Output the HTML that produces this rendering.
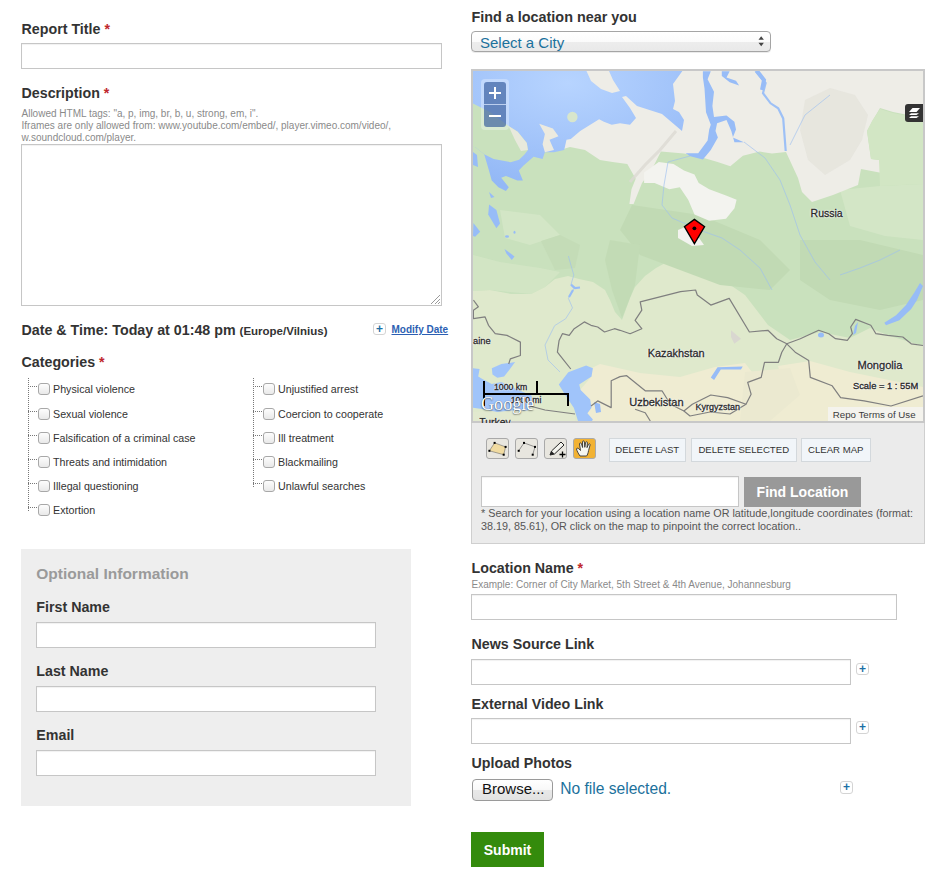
<!DOCTYPE html>
<html><head><meta charset="utf-8"><style>
html,body{margin:0;padding:0;background:#fff;width:952px;height:881px;overflow:hidden;position:relative}
.t{position:absolute;white-space:nowrap;line-height:1;font-family:"Liberation Sans", sans-serif}
.b{position:absolute}
</style></head><body>
<div class="t" style="left:21.5px;top:21.94px;font-size:14.25px;font-weight:bold;color:#333;">Report Title<span style="color:#c0272d">&nbsp;*</span></div>
<div class="b" style="left:21px;top:43px;width:421px;height:26px;background:#fff;border:1px solid #c6c6c6;box-sizing:border-box;box-shadow:inset 0 1px 1px rgba(0,0,0,0.06);"></div>
<div class="t" style="left:21.5px;top:85.94px;font-size:14.25px;font-weight:bold;color:#333;">Description<span style="color:#c0272d">&nbsp;*</span></div>
<div class="t" style="left:21.5px;top:108.53px;font-size:10px;font-weight:normal;color:#8a8a8a;">Allowed HTML tags: "a, p, img, br, b, u, strong, em, i".</div>
<div class="t" style="left:21.5px;top:120.53px;font-size:10px;font-weight:normal;color:#8a8a8a;">Iframes are only allowed from: www.youtube.com/embed/, player.vimeo.com/video/,</div>
<div class="t" style="left:21.5px;top:132.53px;font-size:10px;font-weight:normal;color:#8a8a8a;">w.soundcloud.com/player.</div>
<div class="b" style="left:21px;top:144px;width:421px;height:162px;background:#fff;border:1px solid #c6c6c6;box-sizing:border-box;box-shadow:inset 0 1px 1px rgba(0,0,0,0.06);"></div>
<svg class="b" style="left:428px;top:292px" width="13" height="13"><path d="M12 3 L3 12 M12 7 L7 12 M12 10 L10 12" stroke="#9a9a9a" stroke-width="1"/></svg>
<div class="t" style="left:21.5px;top:322.94px;font-size:14.25px;font-weight:bold;color:#333;">Date &amp; Time: Today at 01:48 pm <span style="font-size:11.5px">(Europe/Vilnius)</span></div>
<div class="b" style="left:373px;top:323px;width:11px;height:10px;border:1px solid #d4d4d4;border-radius:3px;background:#fff"></div>
<div class="t" style="left:373px;top:323px;width:13px;height:12px;line-height:12px;text-align:center;font-size:12px;font-weight:bold;color:#1d6fa5">+</div>
<div class="t" style="left:391.5px;top:324.54px;font-size:10px;font-weight:bold;color:#2c5fb3;"><u>Modify Date</u></div>
<div class="t" style="left:21.5px;top:355.44px;font-size:14.25px;font-weight:bold;color:#333;">Categories<span style="color:#c0272d">&nbsp;*</span></div>
<div class="b" style="left:28px;top:378px;width:0;height:133px;border-left:1px dotted #777"></div>
<div class="b" style="left:28px;top:386px;width:9px;height:0;border-top:1px dotted #777"></div>
<div class="b" style="left:38px;top:383px;width:10px;height:10px;border:1px solid #a8a8a8;border-radius:3px;background:linear-gradient(#fdfdfd,#e9e9e9)"></div>
<div class="t" style="left:53px;top:384.44px;font-size:10.7px;font-weight:normal;color:#333;">Physical violence</div>
<div class="b" style="left:28px;top:411px;width:9px;height:0;border-top:1px dotted #777"></div>
<div class="b" style="left:38px;top:408px;width:10px;height:10px;border:1px solid #a8a8a8;border-radius:3px;background:linear-gradient(#fdfdfd,#e9e9e9)"></div>
<div class="t" style="left:53px;top:409.44px;font-size:10.7px;font-weight:normal;color:#333;">Sexual violence</div>
<div class="b" style="left:28px;top:435px;width:9px;height:0;border-top:1px dotted #777"></div>
<div class="b" style="left:38px;top:432px;width:10px;height:10px;border:1px solid #a8a8a8;border-radius:3px;background:linear-gradient(#fdfdfd,#e9e9e9)"></div>
<div class="t" style="left:53px;top:433.44px;font-size:10.7px;font-weight:normal;color:#333;">Falsification of a criminal case</div>
<div class="b" style="left:28px;top:459px;width:9px;height:0;border-top:1px dotted #777"></div>
<div class="b" style="left:38px;top:456px;width:10px;height:10px;border:1px solid #a8a8a8;border-radius:3px;background:linear-gradient(#fdfdfd,#e9e9e9)"></div>
<div class="t" style="left:53px;top:457.44px;font-size:10.7px;font-weight:normal;color:#333;">Threats and intimidation</div>
<div class="b" style="left:28px;top:483px;width:9px;height:0;border-top:1px dotted #777"></div>
<div class="b" style="left:38px;top:480px;width:10px;height:10px;border:1px solid #a8a8a8;border-radius:3px;background:linear-gradient(#fdfdfd,#e9e9e9)"></div>
<div class="t" style="left:53px;top:481.44px;font-size:10.7px;font-weight:normal;color:#333;">Illegal questioning</div>
<div class="b" style="left:28px;top:507px;width:9px;height:0;border-top:1px dotted #777"></div>
<div class="b" style="left:38px;top:504px;width:10px;height:10px;border:1px solid #a8a8a8;border-radius:3px;background:linear-gradient(#fdfdfd,#e9e9e9)"></div>
<div class="t" style="left:53px;top:505.44px;font-size:10.7px;font-weight:normal;color:#333;">Extortion</div>
<div class="b" style="left:253px;top:378px;width:0;height:109px;border-left:1px dotted #777"></div>
<div class="b" style="left:253px;top:386px;width:9px;height:0;border-top:1px dotted #777"></div>
<div class="b" style="left:263px;top:383px;width:10px;height:10px;border:1px solid #a8a8a8;border-radius:3px;background:linear-gradient(#fdfdfd,#e9e9e9)"></div>
<div class="t" style="left:278px;top:384.44px;font-size:10.7px;font-weight:normal;color:#333;">Unjustified arrest</div>
<div class="b" style="left:253px;top:411px;width:9px;height:0;border-top:1px dotted #777"></div>
<div class="b" style="left:263px;top:408px;width:10px;height:10px;border:1px solid #a8a8a8;border-radius:3px;background:linear-gradient(#fdfdfd,#e9e9e9)"></div>
<div class="t" style="left:278px;top:409.44px;font-size:10.7px;font-weight:normal;color:#333;">Coercion to cooperate</div>
<div class="b" style="left:253px;top:435px;width:9px;height:0;border-top:1px dotted #777"></div>
<div class="b" style="left:263px;top:432px;width:10px;height:10px;border:1px solid #a8a8a8;border-radius:3px;background:linear-gradient(#fdfdfd,#e9e9e9)"></div>
<div class="t" style="left:278px;top:433.44px;font-size:10.7px;font-weight:normal;color:#333;">Ill treatment</div>
<div class="b" style="left:253px;top:459px;width:9px;height:0;border-top:1px dotted #777"></div>
<div class="b" style="left:263px;top:456px;width:10px;height:10px;border:1px solid #a8a8a8;border-radius:3px;background:linear-gradient(#fdfdfd,#e9e9e9)"></div>
<div class="t" style="left:278px;top:457.44px;font-size:10.7px;font-weight:normal;color:#333;">Blackmailing</div>
<div class="b" style="left:253px;top:483px;width:9px;height:0;border-top:1px dotted #777"></div>
<div class="b" style="left:263px;top:480px;width:10px;height:10px;border:1px solid #a8a8a8;border-radius:3px;background:linear-gradient(#fdfdfd,#e9e9e9)"></div>
<div class="t" style="left:278px;top:481.44px;font-size:10.7px;font-weight:normal;color:#333;">Unlawful searches</div>
<div class="b" style="left:21px;top:549px;width:390px;height:257px;background:#eeeeee"></div>
<div class="t" style="left:36.3px;top:565.58px;font-size:15.5px;font-weight:bold;color:#9a9a9a;">Optional Information</div>
<div class="t" style="left:36.3px;top:599.64px;font-size:14.25px;font-weight:bold;color:#333;">First Name</div>
<div class="b" style="left:36px;top:622px;width:340px;height:26px;background:#fff;border:1px solid #c6c6c6;box-sizing:border-box;box-shadow:inset 0 1px 1px rgba(0,0,0,0.06);"></div>
<div class="t" style="left:36.3px;top:663.64px;font-size:14.25px;font-weight:bold;color:#333;">Last Name</div>
<div class="b" style="left:36px;top:686px;width:340px;height:26px;background:#fff;border:1px solid #c6c6c6;box-sizing:border-box;box-shadow:inset 0 1px 1px rgba(0,0,0,0.06);"></div>
<div class="t" style="left:36.3px;top:727.64px;font-size:14.25px;font-weight:bold;color:#333;">Email</div>
<div class="b" style="left:36px;top:750px;width:340px;height:26px;background:#fff;border:1px solid #c6c6c6;box-sizing:border-box;box-shadow:inset 0 1px 1px rgba(0,0,0,0.06);"></div>
<div class="t" style="left:471.4px;top:9.61px;font-size:14.4px;font-weight:bold;color:#333;">Find a location near you</div>
<div class="b" style="left:471px;top:31px;width:298px;height:19px;border:1px solid #a5a5a5;border-radius:4px;background:linear-gradient(#ffffff,#fbfbfb 50%,#ededed 52%,#e9e9e9);box-shadow:0 1px 0 rgba(0,0,0,0.08)"></div>
<div class="t" style="left:480px;top:34.50px;font-size:15px;font-weight:normal;color:#1b719c;">Select a City</div>
<svg class="b" style="left:757px;top:35px" width="8" height="13"><path d="M1.5 4.8 L4.2 1.3 L6.9 4.8 Z M1.5 7.8 L4.2 11.3 L6.9 7.8 Z" fill="#444"/></svg>
<div class="b" style="left:471px;top:69px;width:450px;height:350px;border:2px solid #c8c8c8;overflow:hidden;background:#dfeacb"><svg width="450" height="350" viewBox="473 71 450 350" style="position:absolute;left:0;top:0;display:block">
<defs>
<radialGradient id="sea" cx="0.45" cy="0.1" r="0.9"><stop offset="0" stop-color="#b7d4ff"/><stop offset="1" stop-color="#93b8f6"/></radialGradient>
</defs>
<rect x="473" y="71" width="450" height="350" fill="#c9e1bd"/>
<!-- light steppe -->
<path fill="#dfe9cc" d="M473 291 L490 290 L511 294 L531 294 L545 287 L555 279 L568 276 L579 279 L593 282 L605 290 L610 300 L615 312 L622 320 L630 298 L635 287 L645 276 L656 268 L667 262 L691 262 L705 266 L720 278 L745 295 L768 325 L790 340 L820 332 L850 338 L870 328 L890 336 L923 346 L923 421 L473 421 Z"/>
<path fill="#d6e7c8" d="M473 255 L500 262 L540 268 L560 272 L545 287 L531 294 L490 290 L473 291 Z" opacity="0.7"/>
<!-- lighter patches in forest -->
<path fill="#d3e6c6" d="M840 190 L880 186 L923 184 L923 240 L885 236 L850 226 Z"/>
<path fill="#d3e6c6" d="M500 210 L540 215 L560 235 L530 245 L505 238 Z"/>
<!-- darker forest -->
<path fill="#c1dab4" d="M632 205 L700 215 L760 240 L790 270 L770 290 L720 285 L680 270 L640 255 L620 230 Z"/>
<path fill="#c1dab4" d="M800 240 L860 240 L923 255 L923 300 L880 310 L830 300 L800 280 Z"/>
<path fill="#c4dcb7" d="M541 241 L560 235 L580 245 L575 268 L555 270 Z"/><path fill="#c2dbb5" d="M610 240 L640 245 L635 285 L622 318 L612 290 L605 260 Z"/>
<!-- desert -->
<path fill="#efecd2" d="M588 370 L600 364 L640 373 L680 377 L715 367 L745 363 L758 380 L768 398 L745 421 L578 421 L590 406 L580 390 L592 376 Z"/>
<path fill="#efecd2" d="M778 366 L810 361 L850 372 L923 387 L923 421 L762 421 L788 400 Z"/>
<path fill="#ebe9d0" d="M745 372 L790 368 L800 395 L770 421 L740 421 Z"/>
<path fill="#e2e9cf" d="M473 412 L540 408 L575 414 L575 421 L473 421 Z"/>
<!-- tundra north -->
<path fill="#eeede7" d="M540 71 L923 71 L923 118 L893 112 L880 108 L873 120 L867 131 L871 159 L879 160 L882 173 L861 169 L858 185 L833 195 L812 202 L802 192 L798 178 L786 152 L772 153.6 L759.7 151.5 L742.9 155.7 L730.3 166.2 L717.6 162 L703 157.8 L684 153.6 L660.9 151.5 L652.5 168.3 L642 183 L633.6 204 L629.4 204 L631.5 189.3 L635.7 178.8 L627.3 164.1 L612.6 162 L600 160 L585 150 L570 147 L560 150 L540 140 Z"/>
<path fill="#d2e6c4" d="M872 121 L880 109 L893 113 L923 119 L923 184 L880 186 L879 160 L871 159 L867 131 Z"/>
<path d="M755.5 71 L765.6 83.1 L763 93.2 L770.6 103.3 L778.2 108.3 L783.2 118.4 L785.7 151" stroke="#9dc0f6" stroke-width="2.2" fill="none"/>
<path d="M757 71 L764 80 L762 90" stroke="#97bcf7" stroke-width="4" fill="none"/>
<!-- Putorana texture -->
<path fill="#e5e3dc" d="M805 100 L830 88 L855 95 L868 115 L862 140 L850 160 L825 175 L808 160 L800 130 Z" opacity="0.8"/>
<!-- west siberian swamps -->
<path fill="#f3f3ef" d="M644.1 172.5 L658.8 162 L673.5 164.1 L684 170.4 L694.5 174.6 L698.7 183 L709.2 189.3 L726 195.6 L736.6 199.8 L734.5 208.2 L726 218.7 L709.2 220.8 L694.5 214.5 L688.2 199.8 L679.8 187.2 L669.3 189.3 L654.6 183 L644.1 183 Z"/>
<path fill="#f3f3ef" d="M678 230 L690 225 L704 245 L692 246 L678 238 Z"/>
<!-- Kola land tint -->
<path fill="#e8eadc" d="M510 127 L518 132 L527 143 L528 150 L520 150 L512 138 Z"/>
<!-- Urals -->
<path d="M630 182 L645 165 L660 150 L676 131" stroke="#dcdad3" stroke-width="3" fill="none" opacity="0.8"/>
<!-- north seas -->
<path fill="url(#sea)" d="M473 71 L682.4 71 L673 84 L675 101 L673 109 L679 112 L684 120 L682 131 L662 114 L637 106 L626 96 L622 97 L630 108 L636 118 L630 124.8 L620 123.3 L611.7 124.8 L603.9 121.7 L599.1 119.3 L580.2 131.1 L570.8 139 L566.5 139.7 L564.2 150 L554 152.2 L544.9 152.2 L542.6 159 L533.6 156.8 L523.3 165.8 L518.8 170.4 L522.9 180.6 L517.3 180.6 L505.9 175.9 L501.2 177.8 L508.8 187.3 L505.9 191 L498.4 187.3 L491.7 180.6 L488.9 170.2 L484.2 154.2 L475.7 147.6 L473 146 Z"/>
<!-- Kola peninsula -->
<path fill="#c9e1bd" d="M473 103.6 L490 112 L508.6 126.1 L517.7 131.8 L526.8 143.1 L527.9 150 L524.5 154.5 L519.1 159.8 L510.6 162.2 L493.6 158.9 L484.2 154.2 L475.7 147.6 L473 146.5 Z"/>
<path fill="#e8e9dc" d="M508.6 126.1 L517.7 131.8 L526.8 143.1 L527.9 150 L521 151 L515 140 Z"/>
<!-- Kanin peninsula -->
<path fill="#eceadf" d="M539.2 123.8 L552.9 128.4 L558.5 136.3 L549.5 139.7 L554 149.9 L544.9 152.2 L542.6 144.3 L544.9 134.1 Z"/>
<!-- Novaya Zemlya tip -->
<path fill="#eeede7" d="M586.5 71 L609 71 L613 80 L620 91 L612 93 L601 89 L591 81 Z"/>
<circle cx="572.4" cy="117" r="5.2" fill="#d8e6cc"/>
<!-- Ob gulf -->
<path fill="#97bcf7" d="M702.9 71.3 L710.8 71.3 L707.6 79.2 L714 91.8 L712.4 106 L714 117 L726.5 115.4 L734.4 121.7 L736 129.6 L732.8 137.4 L743.9 142.2 L734.4 142.2 L731.3 131.1 L726.5 120.1 L717.1 123.3 L715.5 131.1 L717.9 137.4 L710.8 150 L702.9 159.5 L690.3 156.3 L685.6 153.2 L698.2 153.2 L707.6 140.6 L709.2 129.6 L710.8 124.8 L706 112.2 L704.5 88.6 L702.9 77.6 Z"/>
<path fill="#97bcf7" d="M721.8 71.3 L729.7 71.3 L726.5 77.6 L736 80.7 L739.1 85.5 L729.7 82.3 L721.8 76 Z"/>
<!-- rivers -->
<g stroke="#9dbff2" stroke-width="0.9" fill="none" opacity="0.7">
<path d="M690 156 L668 162 L664 185 L662 205 L672 218 L686 224 L705 232 L722 238 L740 250 L760 268 L772 290"/>
<path d="M744 142 L765 158 L780 180 L790 205 L800 235 L815 262 L830 280"/>
<path d="M568.4 256 L571 265.5 L573.8 275 L571 284.6 L573.8 288.7 L568.4 298.3 L572.5 307.9 L565.6 318.8 L554.7 325.6 L545 345 L548 360 L560 372"/>
<path d="M830 95 L805 115 L790 145"/>
<path d="M900 250 L880 260 L860 268 L840 275"/>
</g>
<path d="M571 284.6 L575 288 L580 287.5 M573 290 L569 297" stroke="#97bcf7" stroke-width="2.2" fill="none"/>
<!-- lakes -->
<g fill="#97bcf7">
<path d="M489.1 204.5 L496.4 210 L500 223.6 L496.4 228.2 L488.2 214.5 Z"/>
<path d="M473.4 223 L480.2 231.7 L475.1 236.8 L473 236 Z"/>
<path d="M504.5 249 L514.5 256.4 L511.8 260 L506.4 253.6 Z"/><ellipse cx="507" cy="236.5" rx="2" ry="1.2"/><ellipse cx="514.5" cy="232.3" rx="1" ry="1.5"/><path d="M489 192 L494.5 197 L491 198 Z"/>
<path d="M473 152 L477 155 L478 167 L473 165 Z"/>
<path d="M920 283 L923 286 L917 300 L911.2 309 L899.4 320.3 L886 325.3 L884.3 322.8 L896.1 315.2 L906 305 L914 293 Z"/>
<path d="M710.8 377.4 L717.5 367.3 L742.7 366.5 L741 369.5 L720.8 369.5 L714.1 379.9 Z"/>
<path d="M594 402 L600 404 L601 412 L596 413 Z"/>
<path d="M855 326 L858 322 L856 333 L853 335 Z"/>
<ellipse cx="821" cy="335" rx="3" ry="2.5"/>
</g>
<!-- Caspian -->
<path fill="#a0c4fa" d="M558.8 384.6 L568.3 372.3 L586.1 365.5 L592.9 368.2 L591.5 376.4 L579.2 384.6 L580.6 390.1 L590.2 399.6 L591.5 407.8 L587.4 413.3 L592.9 419.4 L592 421 L578 421 L573.8 407.8 L565.6 395.5 Z"/>
<!-- Black sea & Azov -->
<path fill="#a0c4fa" d="M491.8 368.2 L501.4 364.1 L515.1 362.1 L509.6 369.6 L504.1 376.4 L497.3 377.8 L492.5 374.4 Z"/>
<path fill="#a0c4fa" d="M473 368.2 L479.6 368.9 L478.2 376.4 L483.7 379.8 L491.8 383.9 L501.4 381.9 L509.6 386 L521.9 391.4 L531.5 395.5 L532.8 405.1 L527.4 410.5 L511 410.5 L497.3 411.9 L483.7 409.2 L473 407.8 Z"/>
<!-- borders -->
<g stroke="#7f7f7f" stroke-width="1.2" fill="none" stroke-linejoin="round">
<path d="M473.4 300.1 L478.4 306.8 L473.4 310.2 L473.4 318.6 L485.1 316.9 L488.5 325.3 L495.2 333.7 L507 335.4 L520.4 342.1 L520.4 355.5 L510.3 358.9 L508.7 364"/>
<path d="M570.8 369 L564.1 360.6 L557.4 352.2 L559.1 340.4 L562.4 333.7 L569.2 335.4 L574.2 328.7 L584.3 321.9 L591 325.3 L597.7 327 L604.5 332 L614.5 328.7 L620 330.3 L630.1 333.7 L641.8 328.7 L635.1 320.3 L641.8 310.2 L640.2 301.8 L680.5 291.7 L695.6 290 L697.3 295 L710.8 305.1 L729.2 298.4 L749.4 332 L767.9 330.3 L776.7 338.7 L786.8 343.8 L800.3 338.7 L818.7 330.3 L828.8 333.7 L835.5 338.7 L847.3 340.4 L852.4 333.7 L850.7 327 L855.7 319.4 L870.8 325.3 L875.9 333.7 L887.6 335.4 L902.8 337 L911.2 343.8 L923 345.5"/>
<path d="M786.8 343.8 L781.8 352.2 L778.4 362.3 L764.5 362.3 L761.2 377.4 L747.7 382.4 L751.1 394.2 L746 404.3 L727.6 397.6 L710.8 395 L692.3 404.3 L683.9 411 L670.4 404.3 L662 390.8 L645.2 390.8 L626.7 375.7 L620 376.6 L611.2 380.8 L611.2 407.6 L597.7 400.9 L591 406"/>
<path d="M786.8 343.8 L795.2 352.2 L808.7 360.6 L810.3 377.4 L832.2 385.8 L840.6 397.6 L864.1 400.9 L891 406 L923 395.9"/>
<path d="M683.9 411 L690 416 L710 412 L730 414 L746 404.3"/>
<path d="M635.1 409.3 L645.2 412.7 L650.3 421"/>
<path d="M530 406 L545 410 L560 412 L575 414"/>
</g>
<!-- grey patch -->
<path fill="#d9d7d0" d="M731 330.3 L741 338.7 L734.3 343.8 L731 337 Z"/>
</svg>
</div>
<div class="b" style="left:481px;top:79px;width:28px;height:50.5px;border-radius:4px;background:rgba(255,255,255,0.3)"></div>
<div class="b" style="left:484px;top:82px;width:22px;height:45px;border-radius:3px;background:rgba(40,80,150,0.62)"></div>
<div class="b" style="left:484px;top:104px;width:22px;height:1px;background:rgba(210,225,250,0.8)"></div>
<svg class="b" style="left:484px;top:82px" width="22" height="45"><path d="M11 5 V17 M5 11 H17 M5 34 H17" stroke="#fff" stroke-width="2"/></svg>
<div class="b" style="left:905px;top:104px;width:18px;height:18px;border-radius:3px 0 0 3px;background:#333"></div>
<svg class="b" style="left:905px;top:104px" width="18" height="18"><path d="M4 8 L7.5 4 H15 L11.5 8 Z M4 11 L6 9.2 H14 L11.5 11 Z M4 14 L6 12.2 H14 L11.5 14 Z" fill="#fff"/></svg>
<svg class="b" style="left:680px;top:215px" width="30" height="32"><path d="M14.4 4.4 L24.6 11.7 L14.4 28.7 L4.4 11.7 Z" fill="#f00" stroke="#000" stroke-width="1.3" stroke-linejoin="miter"/><circle cx="14.4" cy="13.3" r="1.9" fill="#000"/></svg>
<div class="t" style="left:810.6px;top:207.61px;font-size:10.5px;font-weight:normal;color:#2a2a2a;text-shadow:0 0 2px #fff,0 0 2px #fff,0 0 1px #fff;-webkit-text-stroke:0.3px #2a2a2a;">Russia</div>
<div class="t" style="left:647.7px;top:347.97px;font-size:10.9px;font-weight:normal;color:#2a2a2a;text-shadow:0 0 2px #fff,0 0 2px #fff,0 0 1px #fff;-webkit-text-stroke:0.3px #2a2a2a;">Kazakhstan</div>
<div class="t" style="left:857.4px;top:359.60px;font-size:11.1px;font-weight:normal;color:#2a2a2a;text-shadow:0 0 2px #fff,0 0 2px #fff,0 0 1px #fff;-webkit-text-stroke:0.3px #2a2a2a;">Mongolia</div>
<div class="t" style="left:629.2px;top:397.49px;font-size:11px;font-weight:normal;color:#2a2a2a;text-shadow:0 0 2px #fff,0 0 2px #fff,0 0 1px #fff;-webkit-text-stroke:0.3px #2a2a2a;">Uzbekistan</div>
<div class="t" style="left:695.6px;top:403.08px;font-size:9px;font-weight:normal;color:#2a2a2a;text-shadow:0 0 2px #fff,0 0 2px #fff,0 0 1px #fff;-webkit-text-stroke:0.3px #2a2a2a;">Kyrgyzstan</div>
<div class="t" style="left:473.0px;top:336.73px;font-size:9.3px;font-weight:normal;color:#2a2a2a;text-shadow:0 0 2px #fff,0 0 2px #fff,0 0 1px #fff;-webkit-text-stroke:0.3px #2a2a2a;">aine</div>
<div class="t" style="left:479.3px;top:417.70px;font-size:10.4px;font-weight:normal;color:#2a2a2a;text-shadow:0 0 2px #fff,0 0 2px #fff,0 0 1px #fff;-webkit-text-stroke:0.3px #2a2a2a;clip-path:inset(0 0 4px 0)">Turkey</div>
<div class="t" style="left:852.9px;top:380.64px;font-size:9.4px;font-weight:normal;color:#222;text-shadow:0 0 2px #fff,0 0 2px #fff,0 0 1px #fff;-webkit-text-stroke:0.3px #2a2a2a;">Scale = 1 : 55M</div>
<div class="b" style="left:828px;top:407.3px;width:95px;height:13.7px;background:rgba(245,245,245,0.75)"></div>
<div class="t" style="left:832.8px;top:409.69px;font-size:9.7px;font-weight:normal;color:#3a3a3a;">Repo Terms of Use</div>
<div class="b" style="left:483px;top:381px;width:2px;height:25px;background:#000"></div>
<div class="b" style="left:483px;top:393px;width:86px;height:2px;background:#000"></div>
<div class="b" style="left:536px;top:381px;width:2px;height:13px;background:#000"></div>
<div class="b" style="left:567px;top:393px;width:2px;height:13px;background:#000"></div>
<div class="t" style="left:494px;top:383.14px;font-size:8.7px;font-weight:normal;color:#222;text-shadow:0 0 2px #fff,0 0 2px #fff,0 0 1px #fff;-webkit-text-stroke:0.3px #2a2a2a;">1000 km</div>
<div class="t" style="left:510.8px;top:396.12px;font-size:8.6px;font-weight:normal;color:#222;text-shadow:0 0 2px #fff,0 0 2px #fff,0 0 1px #fff;-webkit-text-stroke:0.3px #2a2a2a;">1000 mi</div>
<div class="t" style="left:480.5px;top:393px;font-family:'Liberation Serif',serif;font-size:19.5px;line-height:22px;color:#fff;transform:scaleX(0.93);transform-origin:0 0;text-shadow:0 0 1px rgba(0,0,0,0.45),0 1px 1.5px rgba(0,0,0,0.45)">Google</div>
<div class="b" style="left:471px;top:423px;width:454px;height:121px;background:#ebebeb;border:1px solid #cfcfcf;border-top:none;box-sizing:border-box"></div>
<div class="b" style="left:486px;top:438px;width:21px;height:19px;border:1px solid #a9a9a9;border-radius:3px;background:#e8e6df"></div>
<div class="b" style="left:515px;top:438px;width:21px;height:19px;border:1px solid #a9a9a9;border-radius:3px;background:#e8e6df"></div>
<div class="b" style="left:544px;top:438px;width:21px;height:19px;border:1px solid #a9a9a9;border-radius:3px;background:#e8e6df"></div>
<div class="b" style="left:573px;top:438px;width:21px;height:19px;border:1px solid #a9a9a9;border-radius:3px;background:#f2b233"></div>
<svg class="b" style="left:486px;top:438px" width="24" height="22"><path d="M8.6 4.9 L19.6 8.9 L17.7 16.7 L3.4 12.8 Z" fill="#f1dba0" stroke="#555" stroke-width="0.5"/><g fill="#000"><rect x="7.6" y="3.9" width="2" height="2"/><rect x="18.6" y="7.9" width="2" height="2"/><rect x="16.7" y="15.7" width="2" height="2"/><rect x="2.4" y="11.8" width="2" height="2"/></g></svg>
<svg class="b" style="left:515px;top:438px" width="24" height="22"><path d="M3.7 12.8 L9 4.9 L20 8.9 L17.7 16.7" fill="none" stroke="#555" stroke-width="0.6"/><g fill="#000"><rect x="2.7" y="11.8" width="2" height="2"/><rect x="8" y="3.9" width="2" height="2"/><rect x="19" y="7.9" width="2" height="2"/><rect x="16.7" y="15.7" width="2" height="2"/></g></svg>
<svg class="b" style="left:544px;top:438px" width="24" height="22"><path d="M6 17 L7.5 13 L17 4 L20 7 L10.5 16 Z" fill="#f4f4ee" stroke="#222" stroke-width="1"/><path d="M6 17 L7.5 13 L10.5 16 Z" fill="#222"/><path d="M15.5 16.5 H21.5 M18.5 13.5 V19.5" stroke="#000" stroke-width="1.3"/></svg>
<svg class="b" style="left:573px;top:438px" width="24" height="22"><path d="M7 18 C5 15 4 13 3.5 11 C3.5 10 5 9.8 6 11 L7.5 12.5 L6.5 6 C6.3 4.8 8 4.5 8.4 5.6 L9.6 9.5 L9.5 3.8 C9.5 2.6 11.3 2.6 11.4 3.8 L11.8 9.3 L12.6 4.5 C12.8 3.4 14.5 3.5 14.4 4.7 L14 9.6 L15.5 6.3 C16 5.3 17.4 5.8 17.1 6.9 L15.6 12.5 C15 15.5 14.5 17 13.5 18 Z" fill="#f6f6f0" stroke="#333" stroke-width="0.9"/></svg>

<div class="b" style="left:608.5px;top:437.5px;width:75.5px;height:22.5px;border:1px solid #d3d8dc;background:#f1f5f9"></div>
<div class="t" style="left:608.5px;top:437.5px;width:77.5px;line-height:24px;text-align:center;font-size:9.6px;color:#333">DELETE LAST</div>
<div class="b" style="left:691px;top:437.5px;width:103.5px;height:22.5px;border:1px solid #d3d8dc;background:#f1f5f9"></div>
<div class="t" style="left:691px;top:437.5px;width:105.5px;line-height:24px;text-align:center;font-size:9.6px;color:#333">DELETE SELECTED</div>
<div class="b" style="left:801px;top:437.5px;width:67.5px;height:22.5px;border:1px solid #d3d8dc;background:#f1f5f9"></div>
<div class="t" style="left:801px;top:437.5px;width:69.5px;line-height:24px;text-align:center;font-size:9.6px;color:#333">CLEAR MAP</div>
<div class="b" style="left:481px;top:476px;width:258px;height:31px;background:#fff;border:1px solid #c6c6c6;box-sizing:border-box;box-shadow:inset 0 1px 1px rgba(0,0,0,0.06);"></div>
<div class="b" style="left:744px;top:477px;width:117px;height:30px;background:#999"></div>
<div class="t" style="left:744px;top:485.15px;font-size:14px;font-weight:bold;color:#fff;"><div style="width:117px;text-align:center">Find Location</div></div>
<div class="t" style="left:481px;top:507.86px;font-size:10.8px;font-weight:normal;color:#555;">* Search for your location using a location name OR latitude,longitude coordinates (format:</div>
<div class="t" style="left:481px;top:520.86px;font-size:10.8px;font-weight:normal;color:#555;">38.19, 85.61), OR click on the map to pinpoint the correct location..</div>
<div class="t" style="left:471.5px;top:560.94px;font-size:14.25px;font-weight:bold;color:#333;">Location Name<span style="color:#c0272d">&nbsp;*</span></div>
<div class="t" style="left:471.5px;top:579.53px;font-size:10px;font-weight:normal;color:#8a8a8a;">Example: Corner of City Market, 5th Street &amp; 4th Avenue, Johannesburg</div>
<div class="b" style="left:471px;top:594px;width:426px;height:26px;background:#fff;border:1px solid #c6c6c6;box-sizing:border-box;box-shadow:inset 0 1px 1px rgba(0,0,0,0.06);"></div>
<div class="t" style="left:471.5px;top:636.74px;font-size:14.25px;font-weight:bold;color:#333;">News Source Link</div>
<div class="b" style="left:471px;top:659px;width:380px;height:26px;background:#fff;border:1px solid #c6c6c6;box-sizing:border-box;box-shadow:inset 0 1px 1px rgba(0,0,0,0.06);"></div>
<div class="b" style="left:856px;top:662.5px;width:11px;height:10.5px;border:1px solid #d4d4d4;border-radius:3px;background:#fff"></div>
<div class="t" style="left:856px;top:662.5px;width:13px;height:12.5px;line-height:12.5px;text-align:center;font-size:12px;font-weight:bold;color:#1d6fa5">+</div>
<div class="t" style="left:471.5px;top:696.94px;font-size:14.25px;font-weight:bold;color:#333;">External Video Link</div>
<div class="b" style="left:471px;top:718px;width:380px;height:26px;background:#fff;border:1px solid #c6c6c6;box-sizing:border-box;box-shadow:inset 0 1px 1px rgba(0,0,0,0.06);"></div>
<div class="b" style="left:856px;top:721px;width:11px;height:10.5px;border:1px solid #d4d4d4;border-radius:3px;background:#fff"></div>
<div class="t" style="left:856px;top:721px;width:13px;height:12.5px;line-height:12.5px;text-align:center;font-size:12px;font-weight:bold;color:#1d6fa5">+</div>
<div class="t" style="left:471.5px;top:755.94px;font-size:14.25px;font-weight:bold;color:#333;">Upload Photos</div>
<div class="b" style="left:472px;top:778.5px;width:79px;height:20px;border:1px solid #9a9a9a;border-radius:4px;background:linear-gradient(#ffffff,#f8f8f8 50%,#e8e8e8 52%,#e2e2e2)"></div>
<div class="t" style="left:482px;top:781.30px;font-size:15px;font-weight:normal;color:#111;">Browse...</div>
<div class="t" style="left:560.2px;top:780.79px;font-size:15.6px;font-weight:normal;color:#1b719c;">No file selected.</div>
<div class="b" style="left:840px;top:781px;width:11px;height:10.5px;border:1px solid #d4d4d4;border-radius:3px;background:#fff"></div>
<div class="t" style="left:840px;top:781px;width:13px;height:12.5px;line-height:12.5px;text-align:center;font-size:12px;font-weight:bold;color:#1d6fa5">+</div>
<div class="b" style="left:471px;top:832px;width:73px;height:35px;background:#348b0c"></div>
<div class="t" style="left:471px;top:843.15px;font-size:14px;font-weight:bold;color:#fff;"><div style="width:73px;text-align:center">Submit</div></div>
</body></html>
